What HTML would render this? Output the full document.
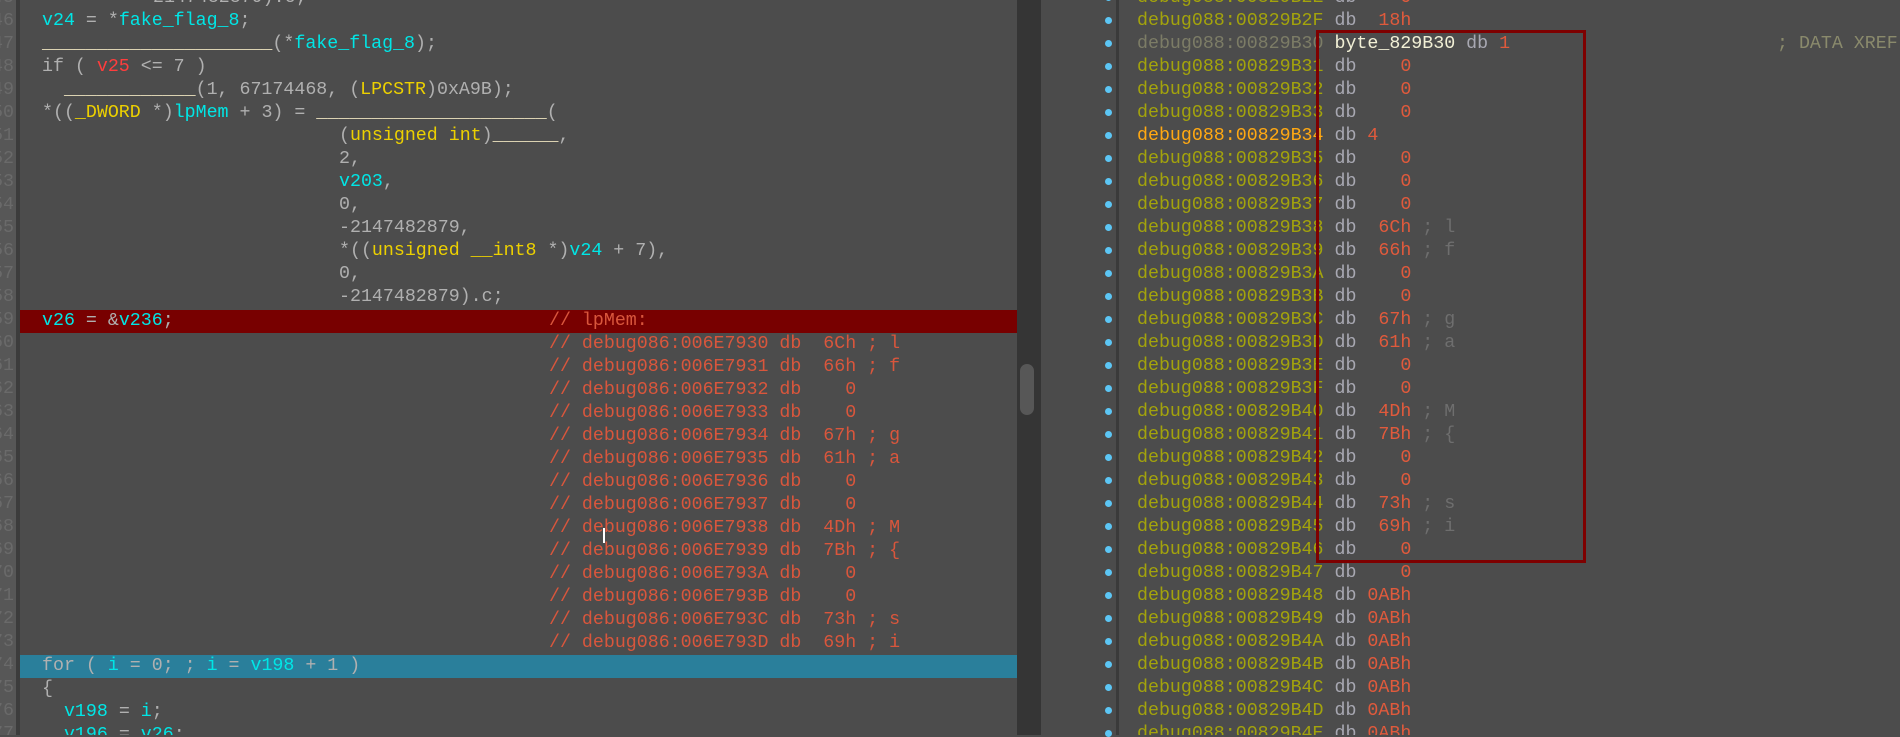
<!DOCTYPE html>
<html><head><meta charset="utf-8"><style>
*{margin:0;padding:0;box-sizing:border-box}
body{width:1900px;height:735px;overflow:hidden;background:#4c4c4c;position:relative;font-family:"Liberation Mono",monospace;font-size:18.3px}
.abs{position:absolute}
.r{position:absolute;height:23px;line-height:23px;white-space:pre}
.s{position:absolute;top:0;white-space:pre}
.d{color:#b0b0b0}.c{color:#00e6e6}.y{color:#ecd000}.rv{color:#ff3d3d}.cm{color:#d9563c}.u{color:#eee4c0}
.ad{color:#a3a30c}.db{color:#a8a8b2}.v{color:#e05a3c}.g{color:#6e6e6e}
.ln{position:absolute;left:-40px;width:54px;text-align:right;color:#6a6a6a}
.dot{position:absolute;left:1105px;width:7px;height:7px;border-radius:50%;background:#5cc6f5}
</style></head><body>
<!-- left panel -->
<div class="abs" style="left:0;top:0;width:16px;height:735px;background:#575757;overflow:hidden" id="g"></div>
<div class="abs" style="left:16px;top:0;width:4px;height:735px;background:#3c3c3c"></div>
<div class="abs" style="left:20px;top:310px;width:997px;height:23px;background:#780000"></div>
<div class="abs" style="left:20px;top:655px;width:997px;height:23px;background:#2a7f9b"></div>
<!-- scrollbar -->
<div class="abs" style="left:1017px;top:0;width:24px;height:735px;background:#353535"></div>
<div class="abs" style="left:1020px;top:364px;width:14px;height:51px;background:#575757;border-radius:7px"></div>
<!-- right panel gutter -->
<div class="abs" style="left:1041px;top:0;width:75px;height:735px;background:#4b4b4b"></div>
<div class="abs" style="left:1116px;top:0;width:3px;height:735px;background:#3a3a3a"></div>

<!-- line numbers -->
<div class="abs" style="left:0;top:0;width:16px;height:735px;overflow:hidden">
<div class="ln" style="top:-13px;line-height:23px">45</div><div class="ln" style="top:10px;line-height:23px">46</div><div class="ln" style="top:33px;line-height:23px">47</div><div class="ln" style="top:56px;line-height:23px">48</div><div class="ln" style="top:79px;line-height:23px">49</div><div class="ln" style="top:102px;line-height:23px">50</div><div class="ln" style="top:125px;line-height:23px">51</div><div class="ln" style="top:148px;line-height:23px">52</div><div class="ln" style="top:171px;line-height:23px">53</div><div class="ln" style="top:194px;line-height:23px">54</div><div class="ln" style="top:217px;line-height:23px">55</div><div class="ln" style="top:240px;line-height:23px">56</div><div class="ln" style="top:263px;line-height:23px">57</div><div class="ln" style="top:286px;line-height:23px">58</div><div class="ln" style="top:309px;line-height:23px">59</div><div class="ln" style="top:332px;line-height:23px">60</div><div class="ln" style="top:355px;line-height:23px">61</div><div class="ln" style="top:378px;line-height:23px">62</div><div class="ln" style="top:401px;line-height:23px">63</div><div class="ln" style="top:424px;line-height:23px">64</div><div class="ln" style="top:447px;line-height:23px">65</div><div class="ln" style="top:470px;line-height:23px">66</div><div class="ln" style="top:493px;line-height:23px">67</div><div class="ln" style="top:516px;line-height:23px">68</div><div class="ln" style="top:539px;line-height:23px">69</div><div class="ln" style="top:562px;line-height:23px">70</div><div class="ln" style="top:585px;line-height:23px">71</div><div class="ln" style="top:608px;line-height:23px">72</div><div class="ln" style="top:631px;line-height:23px">73</div><div class="ln" style="top:654px;line-height:23px">74</div><div class="ln" style="top:677px;line-height:23px">75</div><div class="ln" style="top:700px;line-height:23px">76</div><div class="ln" style="top:723px;line-height:23px">77</div>
</div>

<!-- code -->
<div class="abs" style="left:20px;top:0;width:997px;height:735px;overflow:hidden">
<div class="r d" style="top:-13px;left:122px">-2147482879).c;</div>
<div class="r d" style="top:10px;left:22px"><span class="c">v24</span> = *<span class="c">fake_flag_8</span>;</div>
<div class="r d" style="top:33px;left:22px"><span class="u">_____________________</span>(*<span class="c">fake_flag_8</span>);</div>
<div class="r d" style="top:56px;left:22px">if ( <span class="rv">v25</span> &lt;= 7 )</div>
<div class="r d" style="top:79px;left:22px">  <span class="u">____________</span>(1, 67174468, (<span class="y">LPCSTR</span>)0xA9B);</div>
<div class="r d" style="top:102px;left:22px">*((<span class="y">_DWORD</span> *)<span class="c">lpMem</span> + 3) = <span class="u">_____________________</span>(</div>
<div class="r d" style="top:125px;left:319px">(<span class="y">unsigned int</span>)<span class="u">______</span>,</div>
<div class="r d" style="top:148px;left:319px">2,</div>
<div class="r d" style="top:171px;left:319px"><span class="c">v203</span>,</div>
<div class="r d" style="top:194px;left:319px">0,</div>
<div class="r d" style="top:217px;left:319px">-2147482879,</div>
<div class="r d" style="top:240px;left:319px">*((<span class="y">unsigned __int8</span> *)<span class="c">v24</span> + 7),</div>
<div class="r d" style="top:263px;left:319px">0,</div>
<div class="r d" style="top:286px;left:319px">-2147482879).c;</div>
<div class="r d" style="top:310px;left:22px"><span class="c">v26</span> = &amp;<span class="c">v236</span>;</div>
<div class="r cm" style="top:310px;left:529px">// lpMem:</div>
<div class="r cm" style="top:333px;left:529px">// debug086:006E7930 db  6Ch ; l</div>
<div class="r cm" style="top:356px;left:529px">// debug086:006E7931 db  66h ; f</div>
<div class="r cm" style="top:379px;left:529px">// debug086:006E7932 db    0</div>
<div class="r cm" style="top:402px;left:529px">// debug086:006E7933 db    0</div>
<div class="r cm" style="top:425px;left:529px">// debug086:006E7934 db  67h ; g</div>
<div class="r cm" style="top:448px;left:529px">// debug086:006E7935 db  61h ; a</div>
<div class="r cm" style="top:471px;left:529px">// debug086:006E7936 db    0</div>
<div class="r cm" style="top:494px;left:529px">// debug086:006E7937 db    0</div>
<div class="r cm" style="top:517px;left:529px">// debug086:006E7938 db  4Dh ; M</div>
<div class="r cm" style="top:540px;left:529px">// debug086:006E7939 db  7Bh ; {</div>
<div class="r cm" style="top:563px;left:529px">// debug086:006E793A db    0</div>
<div class="r cm" style="top:586px;left:529px">// debug086:006E793B db    0</div>
<div class="r cm" style="top:609px;left:529px">// debug086:006E793C db  73h ; s</div>
<div class="r cm" style="top:632px;left:529px">// debug086:006E793D db  69h ; i</div>
<div class="abs" style="left:583px;top:528px;width:2px;height:15px;background:#fff"></div>
<div class="r d" style="top:655px;left:22px">for ( <span class="c">i</span> = 0; ; <span class="c">i</span> = <span class="c">v198</span> + 1 )</div>
<div class="r d" style="top:678px;left:22px">{</div>
<div class="r d" style="top:701px;left:22px">  <span class="c">v198</span> = <span class="c">i</span>;</div>
<div class="r d" style="top:724px;left:22px">  <span class="c">v196</span> = <span class="c">v26</span>;</div>
</div>

<!-- right panel -->
<div class="abs" style="left:1119px;top:0;width:781px;height:735px;overflow:hidden">
<div class="r" style="top:-13px;left:18px"><span class="ad">debug088:00829B2E</span> <span class="db">db</span> <span class="v">   0</span></div>
<div class="r" style="top:10px;left:18px"><span class="ad">debug088:00829B2F</span> <span class="db">db</span> <span class="v"> 18h</span></div>
<div class="r" style="top:33px;left:18px"><span style="color:#7c7c66">debug088:00829B30</span> <span style="color:#f2f0d6">byte_829B30</span> <span class="db">db</span> <span class="v">1</span></div>
<div class="r" style="top:33px;left:658px;color:#8a8a6c">; DATA XREF:</div>
<div class="r" style="top:56px;left:18px"><span class="ad">debug088:00829B31</span> <span class="db">db</span> <span class="v">   0</span></div>
<div class="r" style="top:79px;left:18px"><span class="ad">debug088:00829B32</span> <span class="db">db</span> <span class="v">   0</span></div>
<div class="r" style="top:102px;left:18px"><span class="ad">debug088:00829B33</span> <span class="db">db</span> <span class="v">   0</span></div>
<div class="r" style="top:125px;left:18px"><span style="color:#ffa812">debug088:00829B34</span> <span class="db">db</span> <span class="v">4</span></div>
<div class="r" style="top:148px;left:18px"><span class="ad">debug088:00829B35</span> <span class="db">db</span> <span class="v">   0</span></div>
<div class="r" style="top:171px;left:18px"><span class="ad">debug088:00829B36</span> <span class="db">db</span> <span class="v">   0</span></div>
<div class="r" style="top:194px;left:18px"><span class="ad">debug088:00829B37</span> <span class="db">db</span> <span class="v">   0</span></div>
<div class="r" style="top:217px;left:18px"><span class="ad">debug088:00829B38</span> <span class="db">db</span> <span class="v"> 6Ch</span> <span class="g">; l</span></div>
<div class="r" style="top:240px;left:18px"><span class="ad">debug088:00829B39</span> <span class="db">db</span> <span class="v"> 66h</span> <span class="g">; f</span></div>
<div class="r" style="top:263px;left:18px"><span class="ad">debug088:00829B3A</span> <span class="db">db</span> <span class="v">   0</span></div>
<div class="r" style="top:286px;left:18px"><span class="ad">debug088:00829B3B</span> <span class="db">db</span> <span class="v">   0</span></div>
<div class="r" style="top:309px;left:18px"><span class="ad">debug088:00829B3C</span> <span class="db">db</span> <span class="v"> 67h</span> <span class="g">; g</span></div>
<div class="r" style="top:332px;left:18px"><span class="ad">debug088:00829B3D</span> <span class="db">db</span> <span class="v"> 61h</span> <span class="g">; a</span></div>
<div class="r" style="top:355px;left:18px"><span class="ad">debug088:00829B3E</span> <span class="db">db</span> <span class="v">   0</span></div>
<div class="r" style="top:378px;left:18px"><span class="ad">debug088:00829B3F</span> <span class="db">db</span> <span class="v">   0</span></div>
<div class="r" style="top:401px;left:18px"><span class="ad">debug088:00829B40</span> <span class="db">db</span> <span class="v"> 4Dh</span> <span class="g">; M</span></div>
<div class="r" style="top:424px;left:18px"><span class="ad">debug088:00829B41</span> <span class="db">db</span> <span class="v"> 7Bh</span> <span class="g">; {</span></div>
<div class="r" style="top:447px;left:18px"><span class="ad">debug088:00829B42</span> <span class="db">db</span> <span class="v">   0</span></div>
<div class="r" style="top:470px;left:18px"><span class="ad">debug088:00829B43</span> <span class="db">db</span> <span class="v">   0</span></div>
<div class="r" style="top:493px;left:18px"><span class="ad">debug088:00829B44</span> <span class="db">db</span> <span class="v"> 73h</span> <span class="g">; s</span></div>
<div class="r" style="top:516px;left:18px"><span class="ad">debug088:00829B45</span> <span class="db">db</span> <span class="v"> 69h</span> <span class="g">; i</span></div>
<div class="r" style="top:539px;left:18px"><span class="ad">debug088:00829B46</span> <span class="db">db</span> <span class="v">   0</span></div>
<div class="r" style="top:562px;left:18px"><span class="ad">debug088:00829B47</span> <span class="db">db</span> <span class="v">   0</span></div>
<div class="r" style="top:585px;left:18px"><span class="ad">debug088:00829B48</span> <span class="db">db</span> <span class="v">0ABh</span></div>
<div class="r" style="top:608px;left:18px"><span class="ad">debug088:00829B49</span> <span class="db">db</span> <span class="v">0ABh</span></div>
<div class="r" style="top:631px;left:18px"><span class="ad">debug088:00829B4A</span> <span class="db">db</span> <span class="v">0ABh</span></div>
<div class="r" style="top:654px;left:18px"><span class="ad">debug088:00829B4B</span> <span class="db">db</span> <span class="v">0ABh</span></div>
<div class="r" style="top:677px;left:18px"><span class="ad">debug088:00829B4C</span> <span class="db">db</span> <span class="v">0ABh</span></div>
<div class="r" style="top:700px;left:18px"><span class="ad">debug088:00829B4D</span> <span class="db">db</span> <span class="v">0ABh</span></div>
<div class="r" style="top:723px;left:18px"><span class="ad">debug088:00829B4E</span> <span class="db">db</span> <span class="v">0ABh</span></div>
</div>

<!-- dots -->
<div class="dot" style="top:-6px"></div><div class="dot" style="top:17px"></div><div class="dot" style="top:40px"></div><div class="dot" style="top:63px"></div><div class="dot" style="top:86px"></div><div class="dot" style="top:109px"></div><div class="dot" style="top:132px"></div><div class="dot" style="top:155px"></div><div class="dot" style="top:178px"></div><div class="dot" style="top:201px"></div><div class="dot" style="top:224px"></div><div class="dot" style="top:247px"></div><div class="dot" style="top:270px"></div><div class="dot" style="top:293px"></div><div class="dot" style="top:316px"></div><div class="dot" style="top:339px"></div><div class="dot" style="top:362px"></div><div class="dot" style="top:385px"></div><div class="dot" style="top:408px"></div><div class="dot" style="top:431px"></div><div class="dot" style="top:454px"></div><div class="dot" style="top:477px"></div><div class="dot" style="top:500px"></div><div class="dot" style="top:523px"></div><div class="dot" style="top:546px"></div><div class="dot" style="top:569px"></div><div class="dot" style="top:592px"></div><div class="dot" style="top:615px"></div><div class="dot" style="top:638px"></div><div class="dot" style="top:661px"></div><div class="dot" style="top:684px"></div><div class="dot" style="top:707px"></div><div class="dot" style="top:730px"></div>

<!-- red box -->
<div class="abs" style="left:1316px;top:30px;width:270px;height:533px;border:3px solid #7e0000"></div>
</body></html>
